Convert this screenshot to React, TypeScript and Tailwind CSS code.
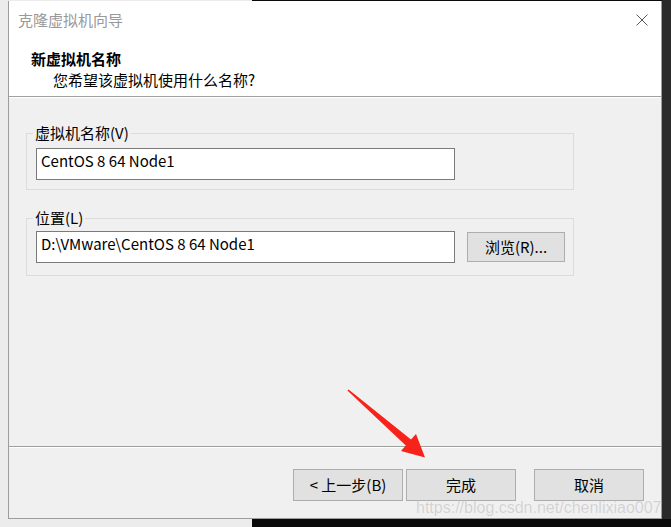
import React from "react";

const FONT = "font-['Noto_Sans_CJK_SC','Microsoft_YaHei',sans-serif]";

function GroupBox({ label, className, children }: { label: string; className?: string; children: React.ReactNode }) {
  return (
    <fieldset className={`w-[548px] border border-[#dcdcdc] pl-[6px] ${className ?? ""}`}>
      <legend className="px-[2px] text-[15px] leading-[18px] text-black">{label}</legend>
      {children}
    </fieldset>
  );
}

function TextBox({ value, className }: { value: string; className?: string }) {
  return (
    <div className={`ml-[3px] flex h-[32px] w-[419px] items-start border border-[#7a7a7a] bg-white pl-[4px] pt-[2px] text-[15px] leading-[20px] text-black ${className ?? ""}`}>
      {value}
    </div>
  );
}

function Button({ label, className }: { label: string; className?: string }) {
  return (
    <button className={`flex h-[32px] w-[110px] items-center justify-center border border-[#adadad] bg-[#e1e1e1] text-[15px] leading-[20px] text-black ${className ?? ""}`}>
      {label}
    </button>
  );
}

export default function App() {
  return (
    <div className={`relative flex h-[527px] w-[671px] overflow-hidden bg-[linear-gradient(to_right,#ececec_252px,#0a0a0a_252px)] ${FONT}`}>
      <div className="w-[8px] shrink-0" />

      {/* dialog window */}
      <div className="mt-[1px] flex h-[518px] w-[654px] shrink-0 flex-col border-x border-b border-[#9c9c9c] bg-white">
        {/* title bar */}
        <div className="flex h-[38px] items-center justify-between pl-[9px] pr-[13px]">
          <span className="text-[15px] leading-[20px] text-[#999]">克隆虚拟机向导</span>
          <svg width="12" height="12" viewBox="0 0 12 12" className="mt-[-1px]">
            <path d="M0.5 0.5 L11.5 11.5 M11.5 0.5 L0.5 11.5" stroke="#555" strokeWidth="1" fill="none" />
          </svg>
        </div>

        {/* header */}
        <div className="pb-[6px] pl-[22px] pt-[9px] text-black">
          <p className="text-[15px] font-bold leading-[21px]">新虚拟机名称</p>
          <p className="pl-[22px] text-[15px] leading-[21px]">您希望该虚拟机使用什么名称?</p>
        </div>
        <div className="h-px bg-[#a0a0a0]" />
        <div className="h-px bg-white" />

        {/* body */}
        <div className="flex-1 bg-[#f0f0f0] pl-[17px] pt-[26px]">
          <GroupBox label="虚拟机名称(V)" className="pb-[9px]">
            <TextBox value="CentOS 8 64 Node1" className="mt-[6px]" />
          </GroupBox>
          <GroupBox label="位置(L)" className="mt-[19px] pb-[12px]">
            <div className="mt-[4px] flex items-center">
              <TextBox value="D:\VMware\CentOS 8 64 Node1" />
              <button className="ml-[12px] flex h-[30px] w-[98px] items-center justify-center border border-[#adadad] bg-[#e1e1e1] text-[15px] leading-[20px] text-black">
                浏览(R)...
              </button>
            </div>
          </GroupBox>
        </div>

        <div className="h-px bg-[#a0a0a0]" />
        <div className="h-px bg-white" />

        {/* footer */}
        <div className="flex h-[70px] justify-end bg-[#f0f0f0] pr-[17px] pt-[21px]">
          <Button label="< 上一步(B)" />
          <Button label="完成" className="ml-[3px]" />
          <Button label="取消" className="ml-[18px]" />
        </div>
      </div>

      <div className="h-[519px] w-[9px] shrink-0 bg-[#2a2a2a]" />

      {/* annotation arrow */}
      <svg className="pointer-events-none absolute left-0 top-0" width="671" height="527" viewBox="0 0 671 527">
        <polygon
          points="347.4,390.6 348.6,389.4 411,439.5 416,434 425,457.5 401,451 405.8,445.5"
          fill="#f7231b"
        />
      </svg>

      {/* watermark */}
      <span className="pointer-events-none absolute left-[416px] top-[500px] font-['Liberation_Sans',Arial,sans-serif] text-[16px] leading-[16px] text-[#d2d2d2] [text-shadow:0_0_1px_#ffffff]">
        https://blog.csdn.net/chenlixiao007
      </span>
    </div>
  );
}
